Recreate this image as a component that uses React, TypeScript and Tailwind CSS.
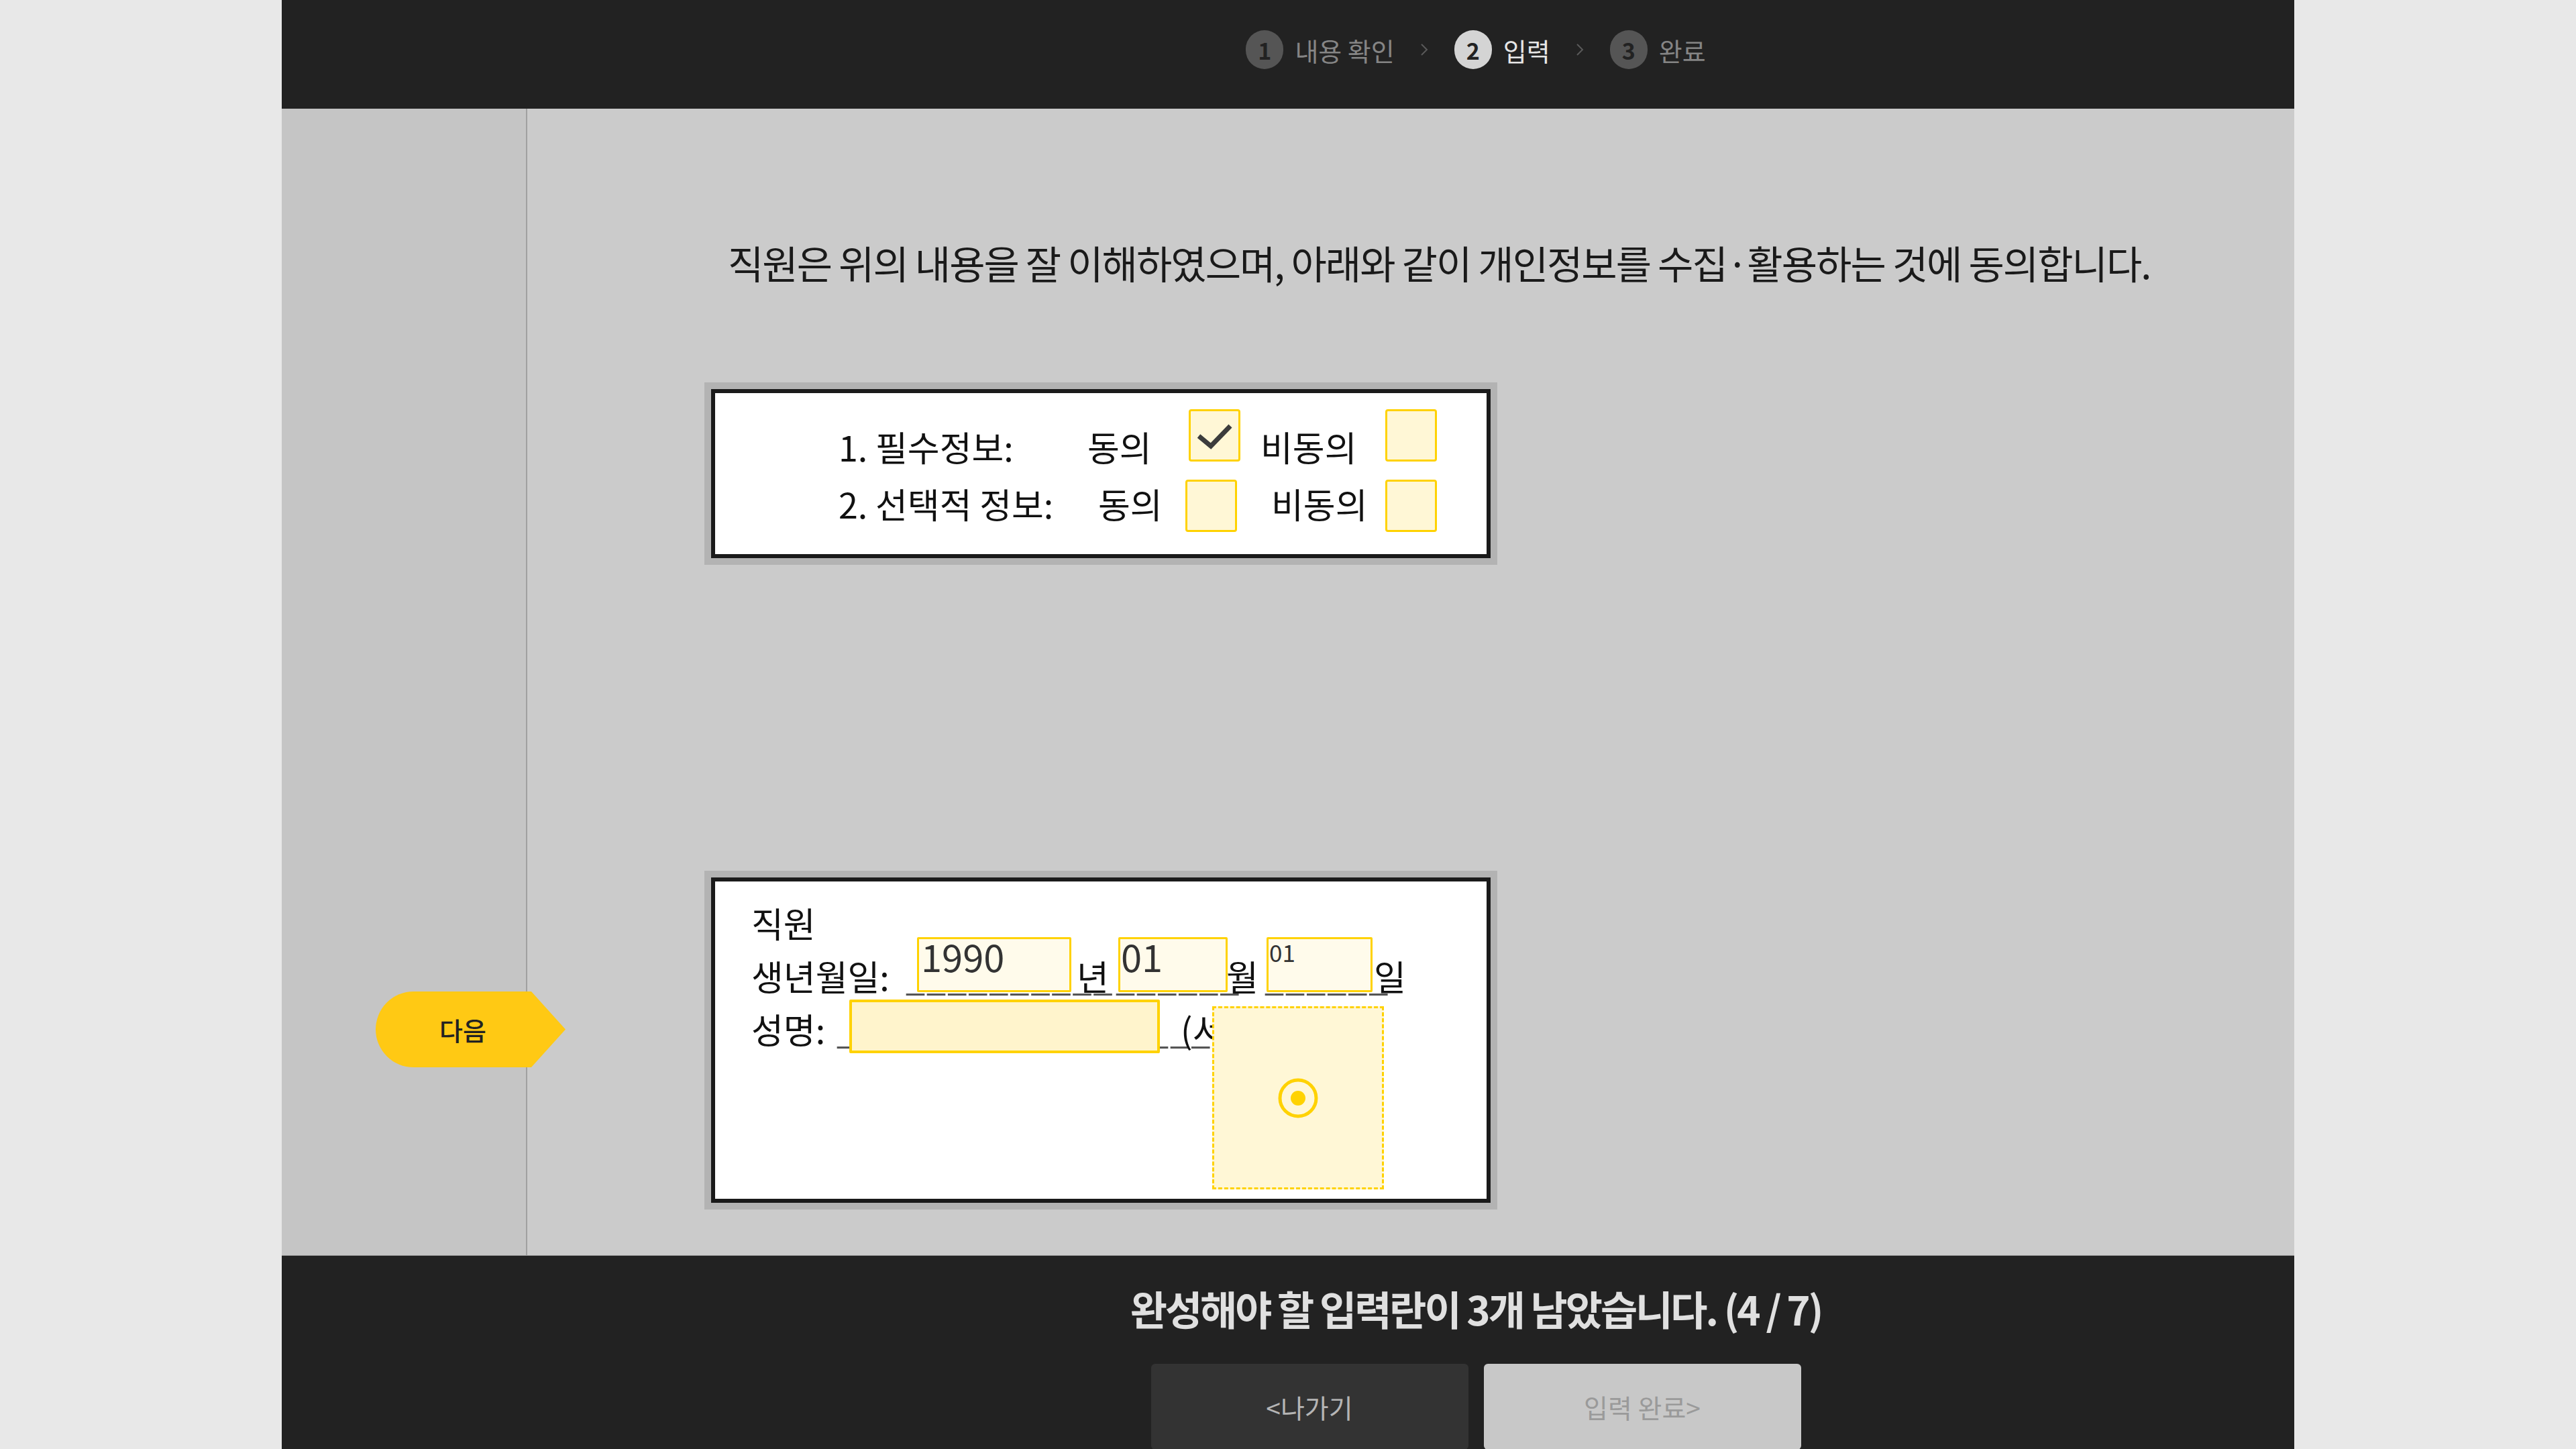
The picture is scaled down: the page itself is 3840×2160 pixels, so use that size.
import React from 'react';

const steps = [
  { n: 1, label: '내용 확인', active: false },
  { n: 2, label: '입력', active: true },
  { n: 3, label: '완료', active: false },
];

function Chevron() {
  return (
    <svg className="mx-[38px] h-[18px] w-[13px]" viewBox="0 0 13 18" fill="none">
      <path d="M2 1l8 8-8 8" stroke="#5a5a5a" strokeWidth="2" />
    </svg>
  );
}

function StepBar() {
  return (
    <div className="flex items-center pb-[14px]">
      {steps.map((s, i) => (
        <React.Fragment key={s.n}>
          {i > 0 && <Chevron />}
          <span
            className={
              s.active
                ? 'flex h-[58px] w-[56px] items-center justify-center rounded-full bg-[#d4d4d4] text-[34px] font-bold text-[#222]'
                : 'flex h-[58px] w-[56px] items-center justify-center rounded-full bg-[#555] text-[34px] font-bold text-[#222]'
            }
          >
            {s.n}
          </span>
          <span
            className={
              s.active
                ? 'ml-[17px] text-[38px] text-[#e6e6e6]'
                : 'ml-[17px] text-[38px] text-[#858585]'
            }
          >
            {s.label}
          </span>
        </React.Fragment>
      ))}
    </div>
  );
}

function Box({ children, inner }: { children: React.ReactNode; inner: string }) {
  return (
    <div className="w-[1182px] border-[10px] border-[#b3b3b3]">
      <div className={'border-[6px] border-[#1a1a1a] bg-white ' + inner}>{children}</div>
    </div>
  );
}

function CheckBox({ checked }: { checked?: boolean }) {
  return (
    <span className="flex h-[78px] w-[77px] shrink-0 rounded-[4px] border-[3px] border-[#ffd200] bg-[#fff7d6]">
      {checked && (
        <svg className="h-full w-full" viewBox="0 0 71 72" fill="none">
          <path d="M12 37l18 15 29-30" stroke="#3c3c3c" strokeWidth="7" />
        </svg>
      )}
    </span>
  );
}

// underscores of the paper form, the input boxes sit on top of them
function Under({ children }: { children: string }) {
  return <span className="tracking-[2px] text-[#555]">{children}</span>;
}

function ConsentBox() {
  return (
    <Box inner="h-[252px] pl-[184px] pt-[24px] text-[52px] leading-none text-[#111]">
      <div className="flex h-[78px] items-start">
        <span className="mt-[30px] w-[371px] shrink-0">1. 필수정보:</span>
        <span className="mt-[30px] w-[151px] shrink-0">동의</span>
        <CheckBox checked />
        <span className="mt-[30px] ml-[30px] w-[186px] shrink-0">비동의</span>
        <CheckBox />
      </div>
      <div className="mt-[27px] flex h-[78px] items-start">
        <span className="mt-[10px] w-[387px] shrink-0">2. 선택적 정보:</span>
        <span className="mt-[10px] w-[130px] shrink-0">동의</span>
        <CheckBox />
        <span className="mt-[10px] ml-[51px] w-[170px] shrink-0">비동의</span>
        <CheckBox />
      </div>
    </Box>
  );
}

function SignBox() {
  return (
    <Box inner="h-[485px] pl-[54px] pt-[22px] text-[52px] leading-[79px] text-[#111]">
      <div>직원</div>
      <div className="flex items-baseline whitespace-nowrap">
        <span className="w-[230px] shrink-0">생년월일:</span>
        <span className="relative w-[255px] shrink-0">
          <Under>__________</Under>
          <span className="absolute left-[17px] top-[-18px] h-[82px] w-[230px] rounded-[2px] border-[3px] border-[#ffd200] bg-[#fffbeb]">
            <span className="-mt-[3px] block pl-[3px] text-[56px] leading-none text-[#333]">1990</span>
          </span>
        </span>
        <span className="w-[58px] shrink-0">년</span>
        <span className="relative w-[165px] shrink-0">
          <Under>______</Under>
          <span className="absolute left-[4px] top-[-18px] h-[82px] w-[163px] rounded-[2px] border-[3px] border-[#ffd200] bg-[#fffbeb]">
            <span className="-mt-[3px] block pl-[1px] text-[56px] leading-none text-[#333]">01</span>
          </span>
        </span>
        <span className="w-[57px] shrink-0">월</span>
        <span className="relative w-[163px] shrink-0">
          <Under>______</Under>
          <span className="absolute left-[3px] top-[-18px] h-[82px] w-[158px] rounded-[2px] border-[3px] border-[#ffd200] bg-[#fffbeb]">
            <span className="mt-[1px] block pl-[1px] text-[35px] leading-none text-[#333]">01</span>
          </span>
        </span>
        <span>일</span>
      </div>
      <div className="flex items-baseline whitespace-nowrap">
        <span className="w-[127px] shrink-0">성명:</span>
        <span className="relative w-[513px] shrink-0">
          <Under>____________________</Under>
          <span className="absolute left-[19px] top-[-4px] h-[80px] w-[463px] rounded-[2px] border-[4px] border-[#ffd200] bg-[#fff4cc]" />
        </span>
        <span className="relative">
          (서명 또는 인)
          <span className="absolute left-[47px] top-[6px] flex h-[273px] w-[256px] items-center justify-center border-[3px] border-dashed border-[#ffd200] bg-[#fff7d6]">
            <svg className="h-[60px] w-[60px]" viewBox="0 0 60 60" fill="none">
              <circle cx="30" cy="30" r="27" stroke="#ffd200" strokeWidth="5" />
              <circle cx="30" cy="30" r="11" fill="#ffd200" />
            </svg>
          </span>
        </span>
      </div>
    </Box>
  );
}

export default function App() {
  return (
    <div className="flex h-[2160px] w-full justify-center overflow-hidden bg-[#e8e8e8] font-['Noto_Sans_CJK_KR',sans-serif]">
      <div className="flex h-full w-[3000px] flex-col">
        {/* Header with progress steps */}
        <header className="flex h-[162px] shrink-0 items-center justify-center bg-[#222] pl-[560px]">
          <StepBar />
        </header>

        {/* Body */}
        <div className="flex min-h-0 flex-1">
          <aside className="relative w-[366px] shrink-0 border-r-2 border-[#a0a0a0] bg-[#c5c5c5]">
            <button className="absolute left-[140px] top-[1316px] flex h-[113px] items-stretch">
              <span className="flex w-[232px] items-center justify-center rounded-l-full bg-[#ffc914] pl-[28px] text-[38px] font-medium text-[#222]">
                다음
              </span>
              <span className="w-[51px] bg-[#ffc914] [clip-path:polygon(0_0,100%_50%,0_100%)]" />
            </button>
          </aside>

          <main className="flex-1 bg-[#cbcbcb] pl-[264px] pt-[200px]">
            <p className="ml-[35px] whitespace-nowrap text-[58px] leading-none tracking-[-2px] text-[#1a1a1a]">
              직원은 위의 내용을 잘 이해하였으며, 아래와 같이 개인정보를 수집·활용하는 것에 동의합니다.
            </p>
            <div className="mt-[150px]">
              <ConsentBox />
            </div>
            <div className="mt-[456px]">
              <SignBox />
            </div>
          </main>
        </div>

        {/* Footer */}
        <footer className="flex h-[289px] shrink-0 flex-col items-center border-t border-[#9a9a9a] bg-[#222] pl-[560px] pt-[48px]">
          <p className="text-[60px] font-bold leading-none tracking-[-0.05em] text-[#e0e0e0]">
            완성해야 할 입력란이 3개 남았습니다. (4 / 7)
          </p>
          <div className="mt-[53px] flex gap-[23px]">
            <button className="flex h-[128px] w-[473px] items-center justify-center rounded-[6px] bg-[#333] text-[39px] text-[#b5b5b5]">
              &lt;나가기
            </button>
            <button className="flex h-[128px] w-[473px] items-center justify-center rounded-[6px] bg-[#c8c8c8] text-[39px] text-[#9a9a9a]">
              입력 완료&gt;
            </button>
          </div>
        </footer>
      </div>
    </div>
  );
}
